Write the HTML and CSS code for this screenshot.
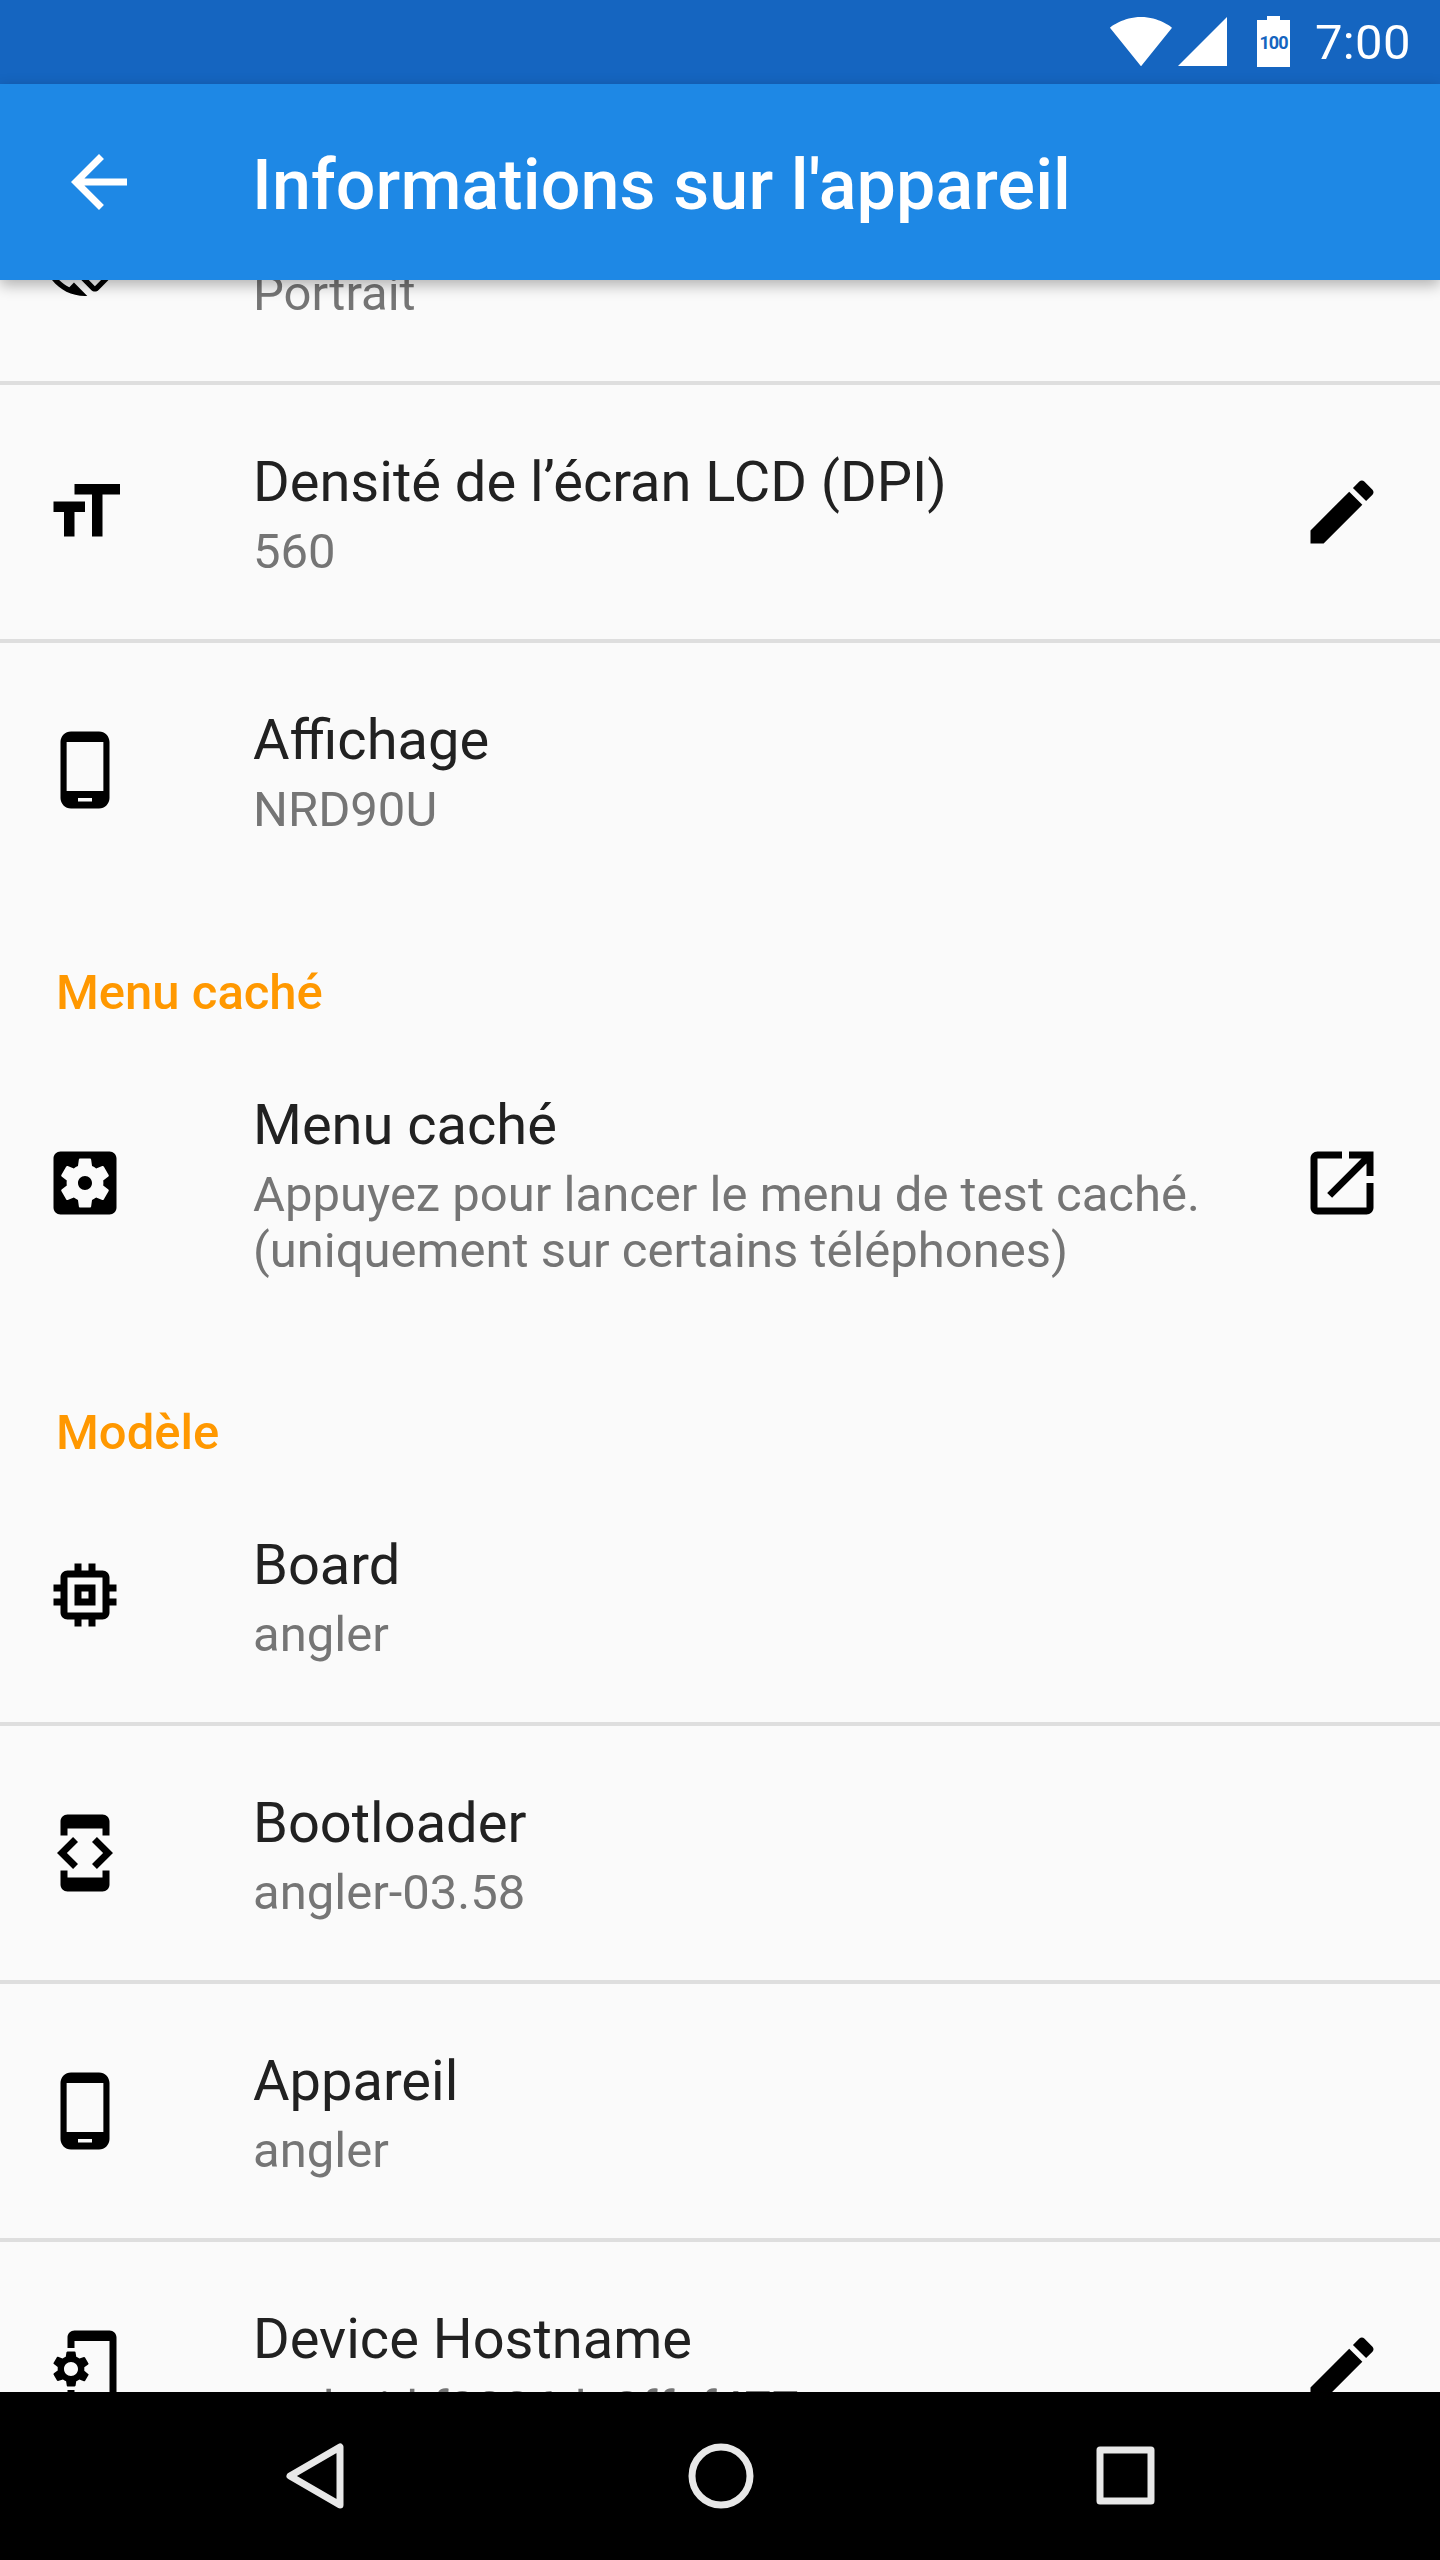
FILE: index.html
```html
<!DOCTYPE html>
<html lang="fr">
<head>
<meta charset="UTF-8" />
<meta name="viewport" content="width=device-width, initial-scale=1" />
<title>Informations sur l'appareil</title>
<link rel="stylesheet" href="styles.css">
</head>
<body>

<div class="status-bar">
  <svg class="wifi" viewBox="0 0 24 24"><path d="M12.01 21.49L23.64 7c-.45-.34-4.93-4-11.64-4C5.28 3 .81 6.66.36 7l11.64 14.49.01.01z"/></svg>
  <svg class="signal" viewBox="0 0 49 49"><path d="M0 49h49V0z"/></svg>
  <svg class="battery" viewBox="0 0 33 51">
    <path d="M10 0h13v4h10v47H0V4h10z"/>
    <text x="16.5" y="33" text-anchor="middle">100</text>
  </svg>
  <span class="clock">7:00</span>
</div>

<header class="toolbar">
  <svg class="icon back" viewBox="0 0 24 24"><path d="M20 11H7.83l5.59-5.59L12 4l-8 8 8 8 1.41-1.41L7.83 13H20v-2z"/></svg>
  <h1>Informations sur l'appareil</h1>
</header>

<main class="content">
  <div class="list">
    <div class="row divided">
      <svg class="icon" viewBox="0 0 24 24"><path d="M16.48 2.52c3.27 1.55 5.61 4.72 5.97 8.48h1.5C23.44 4.84 18.29 0 12 0l-.66.03 3.81 3.81 1.33-1.32zm-6.25-.77c-.59-.59-1.54-.59-2.12 0L1.75 8.11c-.59.59-.59 1.54 0 2.12l12.02 12.02c.59.59 1.54.59 2.12 0l6.36-6.36c.59-.59.59-1.54 0-2.12L10.23 1.75zm4.6 19.44L2.81 9.17l6.36-6.36 12.02 12.02-6.36 6.36zm-7.31.29C4.25 19.94 1.91 16.76 1.55 13H.05C.56 19.16 5.71 24 12 24l.66-.03-3.81-3.81-1.33 1.32z"/></svg>
      <div class="text">
        <div class="title">Orientation</div>
        <div class="summary">Portrait</div>
      </div>
    </div>

    <div class="row divided">
      <svg class="icon" viewBox="0 0 24 24"><path d="M9 4v3h5v12h3V7h5V4H9zm-6 8h3v7h3v-7h3V9H3v3z"/></svg>
      <div class="text">
        <div class="title">Densité de l’écran LCD (DPI)</div>
        <div class="summary">560</div>
      </div>
      <svg class="icon action" viewBox="0 0 24 24"><path d="M3 17.25V21h3.75L17.81 9.94l-3.75-3.75L3 17.25zM20.71 7.04c.39-.39.39-1.02 0-1.41l-2.34-2.34c-.39-.39-1.02-.39-1.41 0l-1.83 1.83 3.75 3.75 1.83-1.83z"/></svg>
    </div>

    <div class="row">
      <svg class="icon" viewBox="0 0 24 24"><path d="M16 1H8C6.34 1 5 2.34 5 4v16c0 1.66 1.34 3 3 3h8c1.66 0 3-1.34 3-3V4c0-1.66-1.34-3-3-3zm-2 20h-4v-1h4v1zm3.25-3H6.75V4h10.5v14z"/></svg>
      <div class="text">
        <div class="title">Affichage</div>
        <div class="summary">NRD90U</div>
      </div>
    </div>

    <h2 class="section">Menu caché</h2>

    <div class="row">
      <svg class="icon" viewBox="0 0 24 24"><path fill-rule="evenodd" d="M12 10c-1.1 0-2 .9-2 2s.9 2 2 2 2-.9 2-2-.9-2-2-2zm7-7H5c-1.1 0-2 .9-2 2v14c0 1.1.9 2 2 2h14c1.1 0 2-.9 2-2V5c0-1.1-.9-2-2-2zm-1.75 9c0 .23-.02.46-.05.68l1.48 1.16c.13.11.17.3.08.45l-1.4 2.42c-.09.15-.27.21-.43.15l-1.74-.7c-.36.28-.76.51-1.18.69l-.26 1.85c-.03.17-.18.3-.35.3h-2.8c-.17 0-.32-.13-.35-.3l-.26-1.85c-.43-.18-.82-.41-1.18-.69l-1.74.7c-.16.06-.34 0-.43-.15l-1.4-2.42c-.09-.15-.05-.34.08-.45l1.48-1.16c-.03-.22-.05-.45-.05-.68 0-.23.02-.46.05-.68l-1.48-1.16c-.13-.11-.17-.3-.08-.45l1.4-2.42c.09-.15.27-.21.43-.15l1.74.7c.36-.28.76-.51 1.18-.69l.26-1.85c.03-.17.18-.3.35-.3h2.8c.17 0 .32.13.35.3l.26 1.85c.43.18.82.41 1.18.69l1.74-.7c.16-.06.34 0 .43.15l1.4 2.42c.09.15.05.34-.08.45l-1.48 1.16c.03.22.05.45.05.68z"/></svg>
      <div class="text">
        <div class="title">Menu caché</div>
        <div class="summary">Appuyez pour lancer le menu de test caché.<br>(uniquement sur certains téléphones)</div>
      </div>
      <svg class="icon action" viewBox="0 0 24 24"><path d="M19 19H5V5h7V3H5c-1.11 0-2 .9-2 2v14c0 1.1.89 2 2 2h14c1.1 0 2-.9 2-2v-7h-2v7zM14 3v2h3.59l-9.83 9.83 1.41 1.41L19 6.41V10h2V3h-7z"/></svg>
    </div>

    <h2 class="section">Modèle</h2>

    <div class="row divided">
      <svg class="icon" viewBox="0 0 24 24"><path d="M15 9H9v6h6V9zm-2 4h-2v-2h2v2zm8-2V9h-2V7c0-1.1-.9-2-2-2h-2V3h-2v2h-2V3H9v2H7c-1.1 0-2 .9-2 2v2H3v2h2v2H3v2h2v2c0 1.1.9 2 2 2h2v2h2v-2h2v2h2v-2h2c1.1 0 2-.9 2-2v-2h2v-2h-2v-2h2zm-4 6H7V7h10v10z"/></svg>
      <div class="text">
        <div class="title">Board</div>
        <div class="summary">angler</div>
      </div>
    </div>

    <div class="row divided">
      <svg class="icon" viewBox="0 0 24 24"><path d="M7 5h10v2h2V3c0-1.1-.9-1.99-2-1.99L7 1c-1.1 0-2 .9-2 2v4h2V5zm8.41 11.59L20 12l-4.59-4.59L14 8.83 17.17 12 14 15.17l1.41 1.42zM10 15.17L6.83 12 10 8.83 8.59 7.41 4 12l4.59 4.59L10 15.17zM17 19H7v-2H5v4c0 1.1.9 2 2 2h10c1.1 0 2-.9 2-2v-4h-2v2z"/></svg>
      <div class="text">
        <div class="title">Bootloader</div>
        <div class="summary">angler-03.58</div>
      </div>
    </div>

    <div class="row divided">
      <svg class="icon" viewBox="0 0 24 24"><path d="M16 1H8C6.34 1 5 2.34 5 4v16c0 1.66 1.34 3 3 3h8c1.66 0 3-1.34 3-3V4c0-1.66-1.34-3-3-3zm-2 20h-4v-1h4v1zm3.25-3H6.75V4h10.5v14z"/></svg>
      <div class="text">
        <div class="title">Appareil</div>
        <div class="summary">angler</div>
      </div>
    </div>

    <div class="row">
      <svg class="icon" viewBox="0 0 24 24"><path fill-rule="evenodd" d="M11.8 12.5v-1l1.1-.8c.1-.1.1-.2.1-.3l-1-1.7c-.1-.1-.2-.2-.3-.1l-1.3.4c-.3-.2-.6-.4-.9-.5l-.2-1.3c0-.1-.1-.2-.3-.2H7c-.1 0-.2.1-.3.2l-.2 1.3c-.3.1-.6.3-.9.5l-1.3-.5c-.1 0-.2 0-.3.1l-1 1.7c-.1.1 0 .2.1.3l1.1.8v1l-1.1.8c-.1.2-.1.3-.1.4l1 1.7c.1.1.2.2.3.1l1.4-.4c.3.2.6.4.9.5l.2 1.3c0 .1.1.2.2.2h2c.1 0 .2-.1.3-.2l.2-1.3c.3-.1.6-.3.9-.5l1.3.5c.1 0 .2 0 .3-.1l1-1.7c.1-.1 0-.2-.1-.3l-1.1-.9zM8 14c-1.1 0-2-.9-2-2s.9-2 2-2 2 .9 2 2-.9 2-2 2zM19 1H9c-1.1 0-2 .9-2 2v3h2V4h10v16H9v-2H7v3c0 1.1.9 2 2 2h10c1.1 0 2-.9 2-2V3c0-1.1-.9-2-2-2z"/></svg>
      <div class="text">
        <div class="title">Device Hostname</div>
        <div class="summary">android-f8336da8ffcf477</div>
      </div>
      <svg class="icon action" viewBox="0 0 24 24"><path d="M3 17.25V21h3.75L17.81 9.94l-3.75-3.75L3 17.25zM20.71 7.04c.39-.39.39-1.02 0-1.41l-2.34-2.34c-.39-.39-1.02-.39-1.41 0l-1.83 1.83 3.75 3.75 1.83-1.83z"/></svg>
    </div>
  </div>
</main>

<nav class="nav-bar">
  <svg class="nav-icon" viewBox="0 0 84 84"><path d="M66 13 L66 71 L16 42 Z"/></svg>
  <svg class="nav-icon" viewBox="0 0 84 84"><circle cx="42" cy="42" r="29"/></svg>
  <svg class="nav-icon" viewBox="0 0 84 84"><rect x="16" y="16" width="51" height="51"/></svg>
</nav>

</body>
</html>
```

FILE: styles.css
```css
/* Reset */
* {
  margin: 0; padding: 0; box-sizing: border-box;
}
html, body {
  height: 100%;
  background: #fafafa;
  font-family: 'Roboto', sans-serif;
  overflow: hidden;
}
body {
  display: flex;
  flex-direction: column;
  height: 2560px;
}

/* Status bar */
.status-bar {
  height: 84px;
  flex-shrink: 0;
  background: #1565c0;
  display: flex;
  align-items: center;
  padding-right: 29px;
  justify-content: flex-end;
  fill: #fff;
  color: #fff;
}
.wifi {
  width: 64px;
  height: 64px;
  margin-top: -3px;
}
.signal {
  width: 49px;
  height: 49px;
  margin: -2px 0 0 5px;
}
.battery {
  width: 33px;
  height: 51px;
  margin: -1px 1px 0 30px;
}
.battery text {
  font-family: 'Roboto', sans-serif;
  font-size: 18px;
  font-weight: 700;
  letter-spacing: -1px;
  fill: #1565c0;
}
.clock {
  font-size: 49px;
  letter-spacing: 0.4px;
  margin-left: 24px;
}

/* Toolbar */
.toolbar {
  height: 196px;
  flex-shrink: 0;
  background: #1e88e5;
  display: flex;
  align-items: center;
  padding-left: 57px;
  box-shadow: 0 5px 14px rgba(0,0,0,0.3);
  position: relative;
  z-index: 2;
}
.toolbar h1 {
  font-size: 70px;
  font-weight: 500;
  letter-spacing: 0.1px;
  color: #fff;
  margin: 6px 0 0 111px;
}
.back {
  fill: #fff;
}

/* List */
.content {
  flex: 1;
  overflow: hidden;
}
.list {
  margin-top: -153px;
}
.row {
  display: flex;
  align-items: center;
  padding: 59px 56px 60px 43px;
}
.row.divided {
  padding-bottom: 59px;
  border-bottom: 4px solid #dedede;
}
.icon {
  width: 84px;
  height: 84px;
  flex-shrink: 0;
}
.text {
  margin-left: 126px;
}
.action {
  margin-left: auto;
}
.title {
  font-size: 56px;
  line-height: 72px;
  margin-top: 2px;
  color: #212121;
}
.summary {
  font-size: 49px;
  line-height: 56px;
  margin-top: 6px;
  color: #757575;
}
.section {
  font-size: 49px;
  font-weight: 500;
  line-height: 56px;
  color: #ff9800;
  padding: 66.5px 0 7px 56px;
}

/* Navigation bar */
.nav-bar {
  height: 168px;
  flex-shrink: 0;
  background: #000;
  display: flex;
  align-items: center;
  justify-content: center;
  gap: 321px;
  padding-left: 2px;
  position: relative;
  z-index: 2;
}
.nav-icon {
  width: 84px;
  height: 84px;
  fill: none;
  stroke: #e8e8e8;
  stroke-width: 7;
  stroke-linejoin: round;
}
```
